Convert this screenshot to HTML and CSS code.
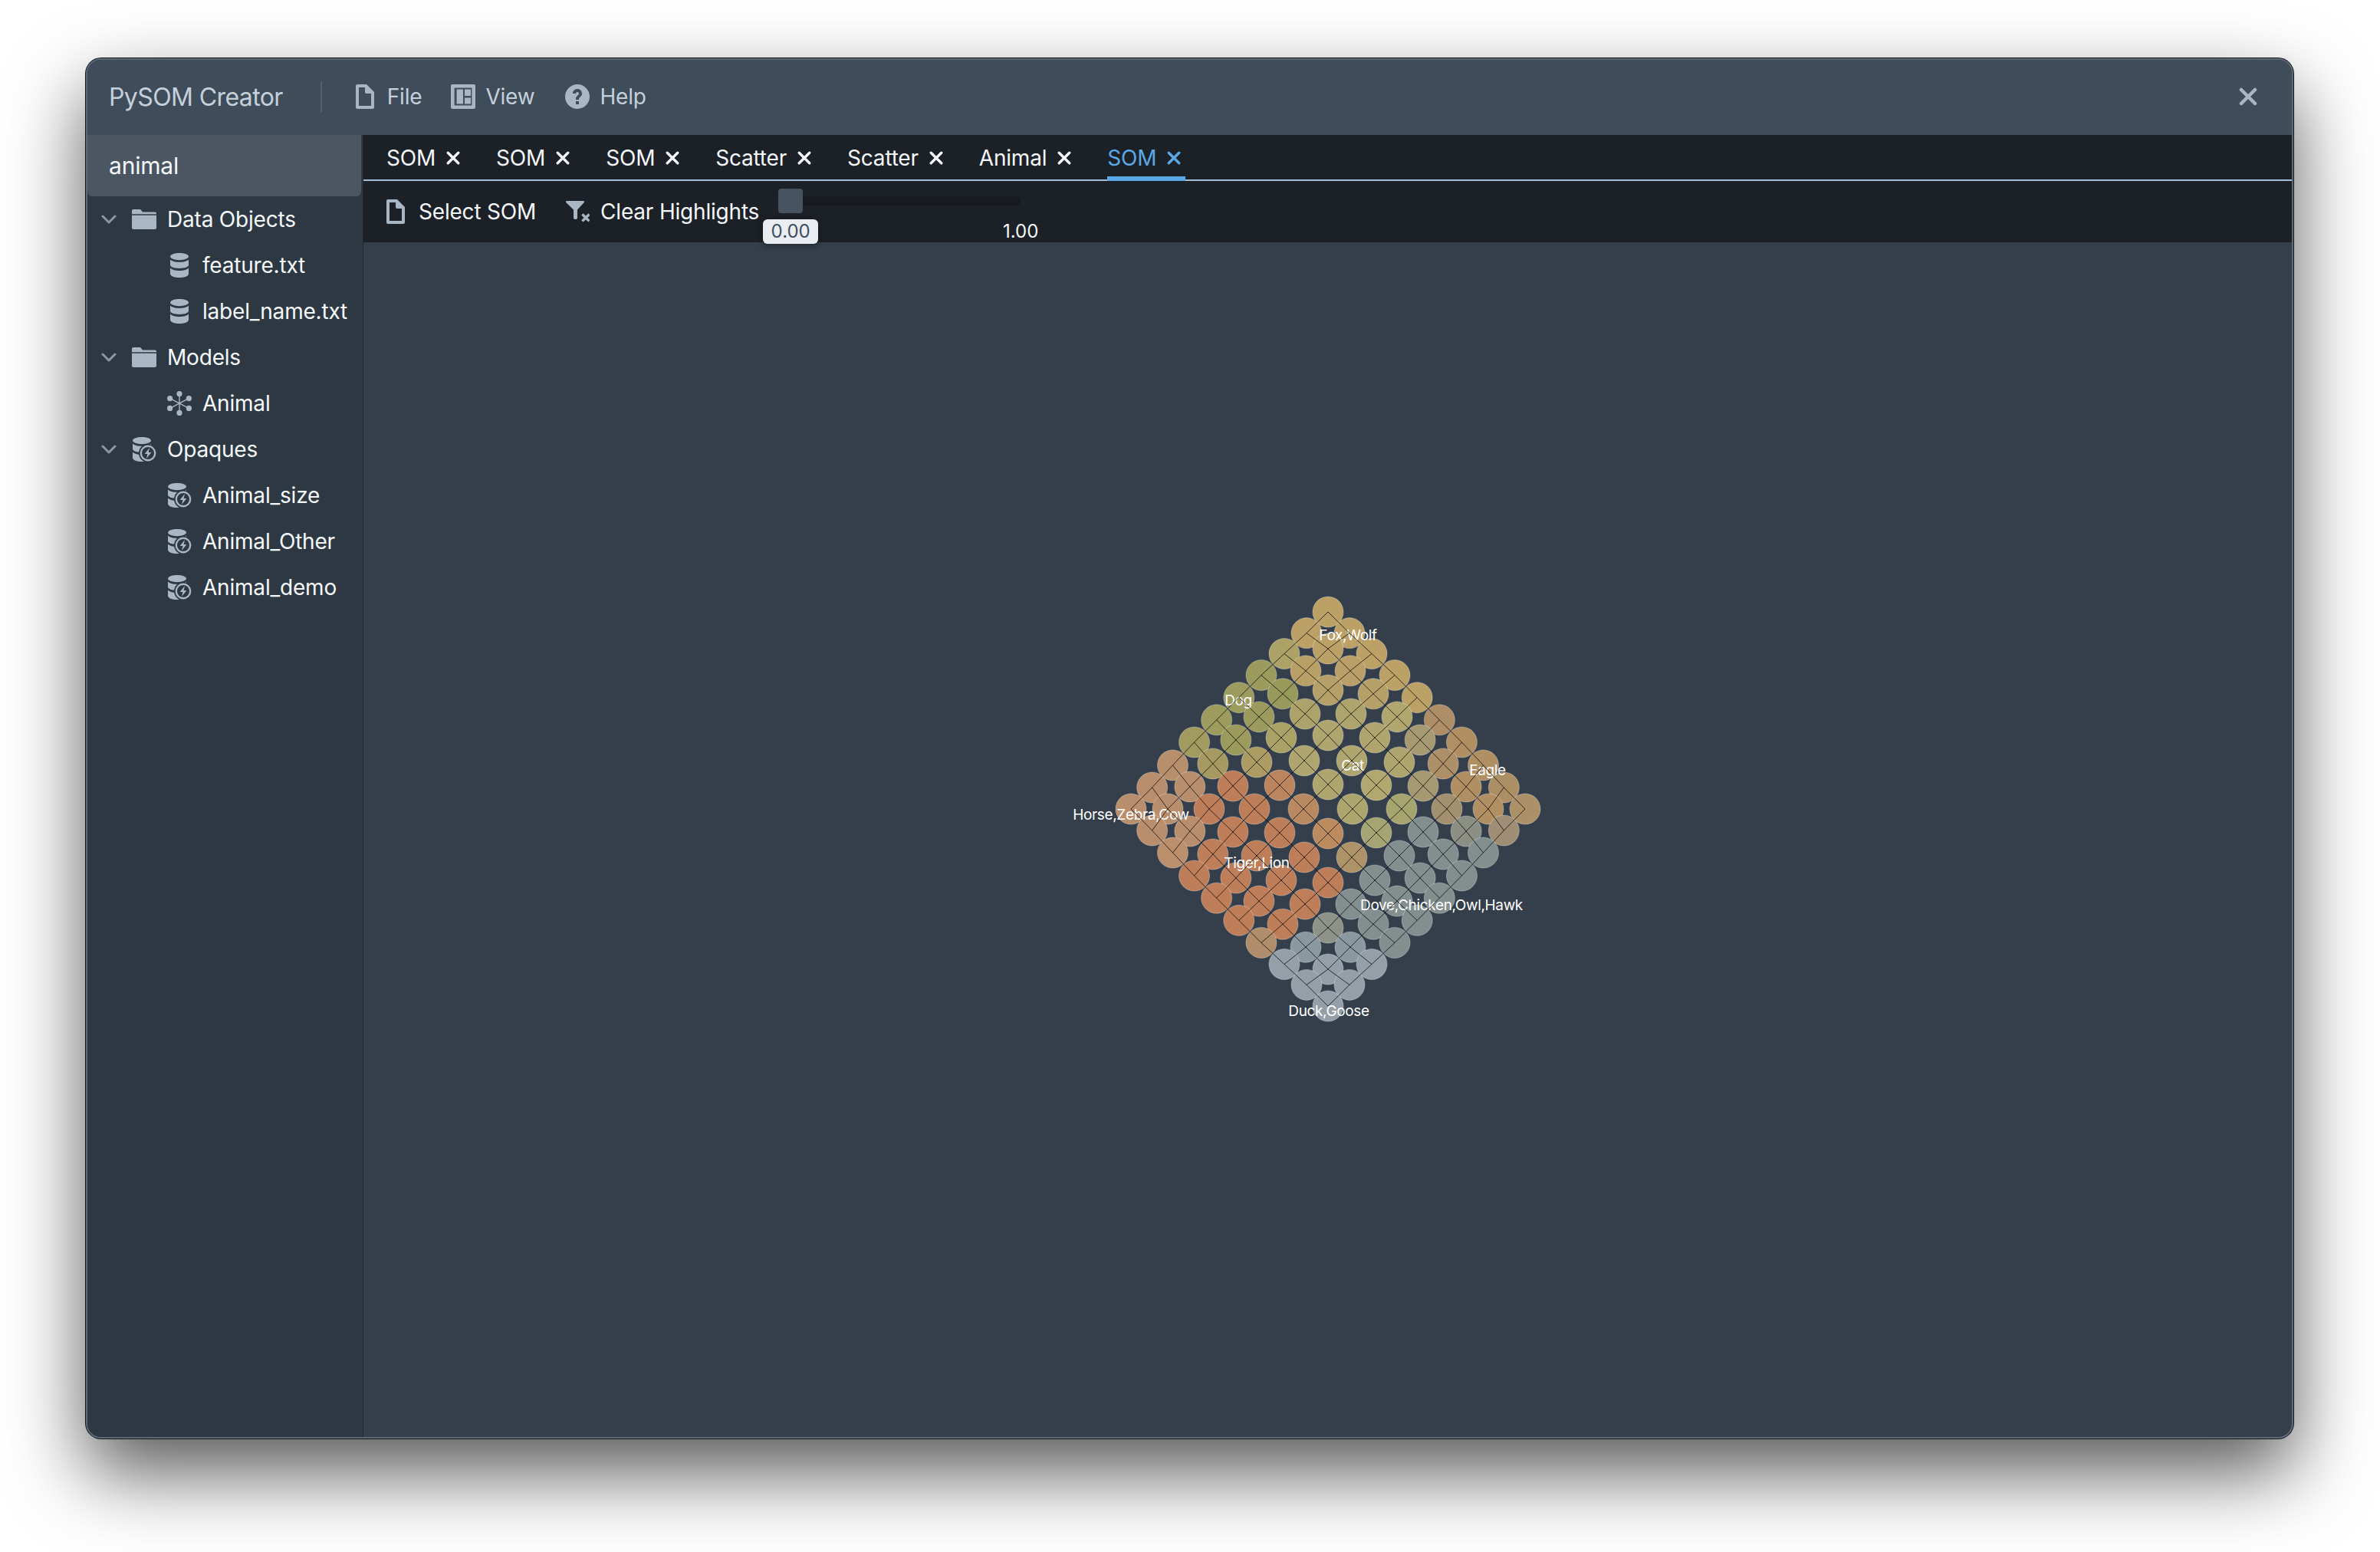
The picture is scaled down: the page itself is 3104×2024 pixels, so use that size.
FILE: index.html
```html
<!DOCTYPE html>
<html lang="en">
<head>
    <meta charset="UTF-8">
    <title>PySOM Creator</title>
    <link rel="stylesheet" href="styles.css">
</head>
<body>
    <!-- icon set -->
    <svg class="icon-defs" width="0" height="0">
        <symbol id="i-doc" viewBox="0 0 16 16"><path fill-rule="evenodd" d="M9 0H3c-.55 0-1 .45-1 1v14c0 .55.45 1 1 1h10c.55 0 1-.45 1-1V5l-5-5zm3 14H4V2h4v3c0 .55.45 1 1 1h3v8z"/></symbol>
        <symbol id="i-control" viewBox="0 0 16 16"><path fill-rule="evenodd" d="M1 0h14c.6 0 1 .4 1 1v14c0 .6-.4 1-1 1H1c-.6 0-1-.4-1-1V1c0-.6.4-1 1-1zm1.3 2.3v11.4h11.4V2.3H2.3zm1.5 1h4.2v9.5H3.8V3.3zm5.2 0h4v4.2H9V3.300zm0 5.500h4v4H9v-4z"/></symbol>
        <symbol id="i-help" viewBox="0 0 16 16"><path fill-rule="evenodd" d="M8 0a8 8 0 100 16A8 8 0 008 0zM7 13h2v-2H7v2zM8 3C6.300 3 5 4.300 5 6h2c0-.6.4-1 1-1s1 .4 1 1c0 .3-.1.5-.3.7l-1 1C7.300 8.100 7 8.600 7 9.200V10h2v-.5c0-.3.1-.5.3-.7l1-1c.4-.4.7-1 .7-1.700C11 4.300 9.700 3 8 3z"/></symbol>
        <symbol id="i-filter-x" viewBox="0 0 16 16">
            <path d="M.5 1.600C.5 1.200.8 1 1.200 1h10.600c.4 0 .7.2.7.6 0 .2-.1.4-.2.5L8 6.700V12c0 .5-.4 1-1 1h-.5c-.6 0-1-.5-1-1V6.700L.7 2.100C.6 2 .5 1.800.5 1.600z"/>
            <path class="icon-line" d="M11.200 9.700l4.500 4.500m0-4.500l-4.500 4.500"/>
        </symbol>
        <symbol id="i-folder" viewBox="0 0 16 16">
            <path d="M0 2.500c0-.6.4-1 1-1h4.500L7 3.200h8c.6 0 1 .4 1 1v.4H0z"/>
            <path d="M0 5.400h16v8.100c0 .6-.4 1-1 1H1c-.6 0-1-.4-1-1z"/>
        </symbol>
        <symbol id="i-db" viewBox="0 0 16 16">
            <path d="M8 0c3.300 0 6 1 6 2.300S11.300 4.600 8 4.600 2 3.600 2 2.300 4.700 0 8 0z"/>
            <path d="M2 4.300v3.500C2 9.100 4.700 10 8 10s6-.9 6-2.200V4.300c-1 1.100-3.400 1.700-6 1.700S3 5.400 2 4.300z"/>
            <path d="M2 9.700v3.800C2 15 4.700 16 8 16s6-1 6-2.500V9.700c-1 1.100-3.400 1.800-6 1.800S3 10.800 2 9.700z"/>
        </symbol>
        <symbol id="i-graph" viewBox="0 0 16 16">
            <path class="icon-spoke" d="M8 2v12M2 4.800l12 6.400M14 4.800L2 11.200"/>
            <circle cx="8" cy="1.800" r="1.800"/><circle cx="8" cy="14.200" r="1.800"/>
            <circle cx="1.800" cy="4.800" r="1.800"/><circle cx="14.200" cy="4.800" r="1.800"/>
            <circle cx="1.800" cy="11.200" r="1.800"/><circle cx="14.200" cy="11.200" r="1.800"/>
        </symbol>
        <symbol id="i-opaque" viewBox="0 0 16 16">
            <path d="M6.500 0C9.800 0 12.500 1 12.500 2.300S9.800 4.600 6.500 4.600.5 3.600.5 2.300 3.200 0 6.500 0z"/>
            <path d="M.5 4.300v3.500c0 1.300 2.700 2.200 6 2.200s6-.9 6-2.200V4.300c-1 1.100-3.400 1.700-6 1.700S1.500 5.400.5 4.300z"/>
            <path d="M.5 9.700v3.800C.5 15 3.200 16 6.500 16s6-1 6-2.500V9.700c-1 1.100-3.400 1.800-6 1.800S1.500 10.800.5 9.700z"/>
            <circle class="icon-halo" cx="10.500" cy="10.500" r="6"/>
            <circle cx="10.500" cy="10.500" r="5.200"/>
            <circle class="icon-hole" cx="10.500" cy="10.500" r="4"/>
            <path d="M11.500 7L8.300 11h1.900l-.7 3 3.200-4h-1.900z"/>
        </symbol>
        <symbol id="i-chevron" viewBox="0 0 20 20"><path class="icon-chev" d="M2 6l8 8 8-8"/></symbol>
        <symbol id="i-x" viewBox="0 0 16 16"><path class="icon-x" d="M2 2l12 12M14 2L2 14"/></symbol>
    </svg>

    <div class="window">
        <header class="navbar">
            <span class="app-title">PySOM Creator</span>
            <span class="nav-divider"></span>
            <button class="nav-btn btn-file"><svg class="icon"><use href="#i-doc"/></svg>File</button>
            <button class="nav-btn btn-view"><svg class="icon"><use href="#i-control"/></svg>View</button>
            <button class="nav-btn btn-help"><svg class="icon"><use href="#i-help"/></svg>Help</button>
            <svg class="close-icon"><use href="#i-x"/></svg>
        </header>

        <div class="content">
            <aside class="sidebar">
                <div class="project-name">animal</div>
                <ul class="tree">
                    <li class="tree-row"><svg class="chev"><use href="#i-chevron"/></svg><svg class="icon"><use href="#i-folder"/></svg>Data Objects</li>
                    <li class="tree-row child"><svg class="icon"><use href="#i-db"/></svg>feature.txt</li>
                    <li class="tree-row child"><svg class="icon"><use href="#i-db"/></svg>label_name.txt</li>
                    <li class="tree-row"><svg class="chev"><use href="#i-chevron"/></svg><svg class="icon"><use href="#i-folder"/></svg>Models</li>
                    <li class="tree-row child"><svg class="icon"><use href="#i-graph"/></svg>Animal</li>
                    <li class="tree-row"><svg class="chev"><use href="#i-chevron"/></svg><svg class="icon"><use href="#i-opaque"/></svg>Opaques</li>
                    <li class="tree-row child"><svg class="icon"><use href="#i-opaque"/></svg>Animal_size</li>
                    <li class="tree-row child"><svg class="icon"><use href="#i-opaque"/></svg>Animal_Other</li>
                    <li class="tree-row child"><svg class="icon"><use href="#i-opaque"/></svg>Animal_demo</li>
                </ul>
            </aside>

            <main class="main">
                <div class="tabs">
                    <div class="tab">SOM<svg class="tab-x"><use href="#i-x"/></svg></div>
                    <div class="tab">SOM<svg class="tab-x"><use href="#i-x"/></svg></div>
                    <div class="tab">SOM<svg class="tab-x"><use href="#i-x"/></svg></div>
                    <div class="tab">Scatter<svg class="tab-x"><use href="#i-x"/></svg></div>
                    <div class="tab">Scatter<svg class="tab-x"><use href="#i-x"/></svg></div>
                    <div class="tab">Animal<svg class="tab-x"><use href="#i-x"/></svg></div>
                    <div class="tab active">SOM<svg class="tab-x"><use href="#i-x"/></svg></div>
                </div>

                <div class="toolbar">
                    <button class="tool-btn"><svg class="icon"><use href="#i-doc"/></svg>Select SOM</button>
                    <button class="tool-btn"><svg class="icon"><use href="#i-filter-x"/></svg>Clear Highlights</button>
                    <div class="slider">
                        <div class="slider-track"></div>
                        <div class="slider-handle"></div>
                        <div class="slider-value">0.00</div>
                        <div class="slider-max">1.00</div>
                    </div>
                </div>

                <div class="som-view">
                    <svg id="somChart" class="som-chart" width="700" height="640" viewBox="0 0 700 640">
                        <g id="somCells"></g>
                        <g class="som-labels">
                            <text x="376" y="93">Fox,Wolf</text>
                            <text x="233" y="178">Dog</text>
                            <text x="382" y="263">Cat</text>
                            <text x="558" y="269">Eagle</text>
                            <text x="93" y="327">Horse,Zebra,Cow</text>
                            <text x="257" y="390">Tiger,Lion</text>
                            <text x="498" y="445">Dove,Chicken,Owl,Hawk</text>
                            <text x="351" y="583">Duck,Goose</text>
                        </g>
                        <g id="somGrid"></g>
                    </svg>
                </div>
            </main>
        </div>
    </div>

    <script src="script.js"></script>
</body>
</html>
```

FILE: styles.css
```css
* {
    margin: 0;
    padding: 0;
    box-sizing: border-box;
}

body {
    width: 3104px;
    height: 2024px;
    padding: 76px 113px 148px 112px;
    background: #ffffff;
    font-family: Inter, "Noto Sans", sans-serif;
    font-size: 28px;
    letter-spacing: -0.2px;
    color: #f5f8fa;
    overflow: hidden;
}

.icon-defs {
    position: absolute;
}

.window {
    display: flex;
    flex-direction: column;
    height: 100%;
    border: 2px solid #5d6975;
    border-radius: 20px;
    overflow: hidden;
    background: #343f4b;
    box-shadow: 0 0 0 1px #14171a, 0 44px 100px rgba(0, 0, 0, 0.66);
}

/* icons */
.icon {
    flex: none;
    width: 32px;
    height: 32px;
    fill: #a9b6c3;
}

.icon-line {
    fill: none;
    stroke: #a9b6c3;
    stroke-width: 1.7;
}

.icon-spoke {
    fill: none;
    stroke: #a9b6c3;
    stroke-width: 0.7;
}

.icon-halo,
.icon-hole {
    fill: #2e3843;
}

.icon-chev {
    fill: none;
    stroke: #8a97a5;
    stroke-width: 3;
    stroke-linecap: round;
    stroke-linejoin: round;
}

.icon-x {
    fill: none;
    stroke: currentColor;
    stroke-width: 3;
    stroke-linecap: round;
}

/* title bar */
.navbar {
    flex: none;
    display: flex;
    align-items: center;
    height: 98px;
    padding: 0 45px 2px 28px;
    background: #3f4c5a;
    color: #c6d0da;
}

.app-title {
    font-size: 32px;
    letter-spacing: -0.6px;
    margin-right: 49px;
}

.nav-divider {
    width: 2px;
    height: 40px;
    margin-right: 40px;
    background: #53606d;
}

.nav-btn,
.tool-btn {
    display: flex;
    align-items: center;
    gap: 13px;
    border: none;
    background: none;
    color: inherit;
    font: inherit;
    letter-spacing: inherit;
}

.btn-file {
    margin-right: 38px;
}

.btn-view {
    margin-right: 40px;
}

.close-icon {
    margin-left: auto;
    width: 24px;
    height: 24px;
    color: #a9b6c3;
}

/* left tree */
.content {
    flex: 1;
    display: flex;
    min-height: 0;
}

.sidebar {
    flex: none;
    width: 360px;
    background: #2e3843;
    border-right: 1px solid #26292c;
    overflow: hidden;
}

.project-name {
    height: 80px;
    margin-right: 2px;
    padding-left: 28px;
    line-height: 80px;
    font-size: 30px;
    background: #4b5662;
    border-radius: 0 0 6px 6px;
}

.tree {
    list-style: none;
}

.tree-row {
    display: flex;
    align-items: center;
    height: 60px;
    gap: 14px;
    padding-left: 18px;
    white-space: nowrap;
}

.tree-row.child {
    padding-left: 104px;
}

.chev {
    flex: none;
    width: 20px;
    height: 20px;
    margin-right: 6px;
}

/* tabs and tools */
.main {
    flex: 1;
    display: flex;
    flex-direction: column;
    min-width: 0;
}

.tabs {
    flex: none;
    display: flex;
    gap: 41px;
    height: 60px;
    padding-left: 30px;
    background: #1c2127;
    border-bottom: 2px solid #a3bfd6;
}

.tab {
    display: flex;
    align-items: center;
    gap: 14px;
    height: 60px;
    padding: 6px 6px 0 0;
    border-bottom: 6px solid transparent;
}

.tab-x {
    width: 18px;
    height: 18px;
    color: #f5f8fa;
}

.tab.active {
    color: #5aa9e6;
    border-bottom-color: #5aa9e6;
}

.tab.active .tab-x {
    color: #5aa9e6;
}

.toolbar {
    flex: none;
    display: flex;
    align-items: center;
    gap: 38px;
    height: 80px;
    padding-left: 26px;
    background: #1c2127;
}

.tool-btn {
    gap: 14px;
}

.slider {
    position: relative;
    align-self: stretch;
    width: 300px;
    margin-left: 3px;
    font-size: 24px;
    letter-spacing: 0;
}

.slider-track {
    margin-top: 20px;
    height: 12px;
    background: #171b1f;
    border-radius: 6px;
}

.slider-handle {
    position: absolute;
    left: -16px;
    top: 10px;
    width: 32px;
    height: 32px;
    background: #475360;
    border-radius: 4px;
}

.slider-value {
    position: absolute;
    left: -36px;
    top: 50px;
    width: 72px;
    height: 32px;
    line-height: 32px;
    text-align: center;
    color: #3f4e5c;
    background: #e9edf1;
    border-radius: 6px;
    box-shadow: 0 2px 8px rgba(0, 0, 0, 0.4);
    z-index: 1;
}

.slider-max {
    position: absolute;
    left: 264px;
    top: 50px;
    width: 72px;
    line-height: 32px;
    text-align: center;
}

/* chart area */
.som-view {
    flex: 1;
    display: flex;
    justify-content: center;
    padding-top: 419px;
}

.som-chart {
    flex: none;
}

.som-cell {
    stroke: rgba(255, 255, 255, 0.3);
    stroke-width: 1;
}

.som-labels text {
    fill: #ffffff;
    font-size: 19px;
    letter-spacing: -0.35px;
    text-anchor: middle;
    dominant-baseline: central;
}

.som-line {
    stroke: rgba(0, 0, 0, 0.72);
    stroke-width: 1;
    fill: none;
}
```

FILE: script.js
```javascript
// SOM colours, one list per diagonal row, left to right
var T = '#bca167', O = '#9a9b5d', K = '#afa56f', S = '#b98e6c', R = '#bd7e59';
var G = '#838e8f', L = '#959fa8', B = '#b08f63';

var rows = [
    [T],
    [T, T],
    ['#aca268', T, T],
    [O, '#b8a067', '#baa068', T],
    ['#9d9c5f', '#989a5c', '#b6a069', '#b6a06a', T],
    ['#9c9c5e', O, '#aca26a', '#aea46d', '#b0a66e', '#ae8e66'],
    ['#a29b60', O, '#a9a166', K, '#b0a56e', '#a79971', B],
    ['#b88f6d', '#a69a62', '#ad9b64', K, K, '#aea56e', '#ad8f68', B],
    [S, S, R, '#bb8560', K, '#b3a770', '#a69870', B, '#ad8f65'],
    [S, S, R, R, '#b98a62', '#aca56e', '#a6a56f', '#a2906f', B, '#ac9068'],
    [S, S, R, R, '#bc8c60', '#a5a574', G, '#8c8f83', '#a08d75'],
    ['#bb8f6c', R, R, R, '#ae9268', G, G, G],
    [R, R, R, R, G, G, G],
    [R, R, R, G, G, G],
    [R, R, '#8e9289', G, G],
    ['#b08e6c', '#8a989f', '#8a989f', G],
    [L, L, L],
    [L, L],
    [L]
];

// spacing shrinks towards the rim of the diamond
var steps = [0, 32, 64, 96, 126, 155, 183, 209, 233, 257];
var cx = 350, cy = 320, radius = 20;
var svgNS = 'http://www.w3.org/2000/svg';

function place(a, b) {
    var sx = a < 0 ? -1 : 1, sy = b < 0 ? -1 : 1;
    return {
        x: cx + sx * steps[Math.abs(a)] * (1 - 0.14 * Math.abs(b) / 9),
        y: cy + sy * steps[Math.abs(b)] * (1 - 0.14 * Math.abs(a) / 9)
    };
}

function rowStart(k) {
    return -Math.min(k, 18 - k);
}

function addLine(parent, p, q) {
    var line = document.createElementNS(svgNS, 'line');
    line.setAttribute('class', 'som-line');
    line.setAttribute('x1', p.x);
    line.setAttribute('y1', p.y);
    line.setAttribute('x2', q.x);
    line.setAttribute('y2', q.y);
    parent.appendChild(line);
}

var cells = document.getElementById('somCells');
var grid = document.getElementById('somGrid');

rows.forEach(function (row, k) {
    row.forEach(function (colour, n) {
        var a = rowStart(k) + 2 * n;
        var p = place(a, k - 9);

        var c = document.createElementNS(svgNS, 'circle');
        c.setAttribute('class', 'som-cell');
        c.setAttribute('cx', p.x);
        c.setAttribute('cy', p.y);
        c.setAttribute('r', radius);
        c.setAttribute('fill', colour);
        cells.appendChild(c);

        // connect to the two neighbours on the next row
        if (k < 18) {
            [-1, 1].forEach(function (d) {
                if (Math.abs(a + d) <= Math.min(k + 1, 17 - k)) {
                    addLine(grid, p, place(a + d, k - 8));
                }
            });
        }
    });
});
```
